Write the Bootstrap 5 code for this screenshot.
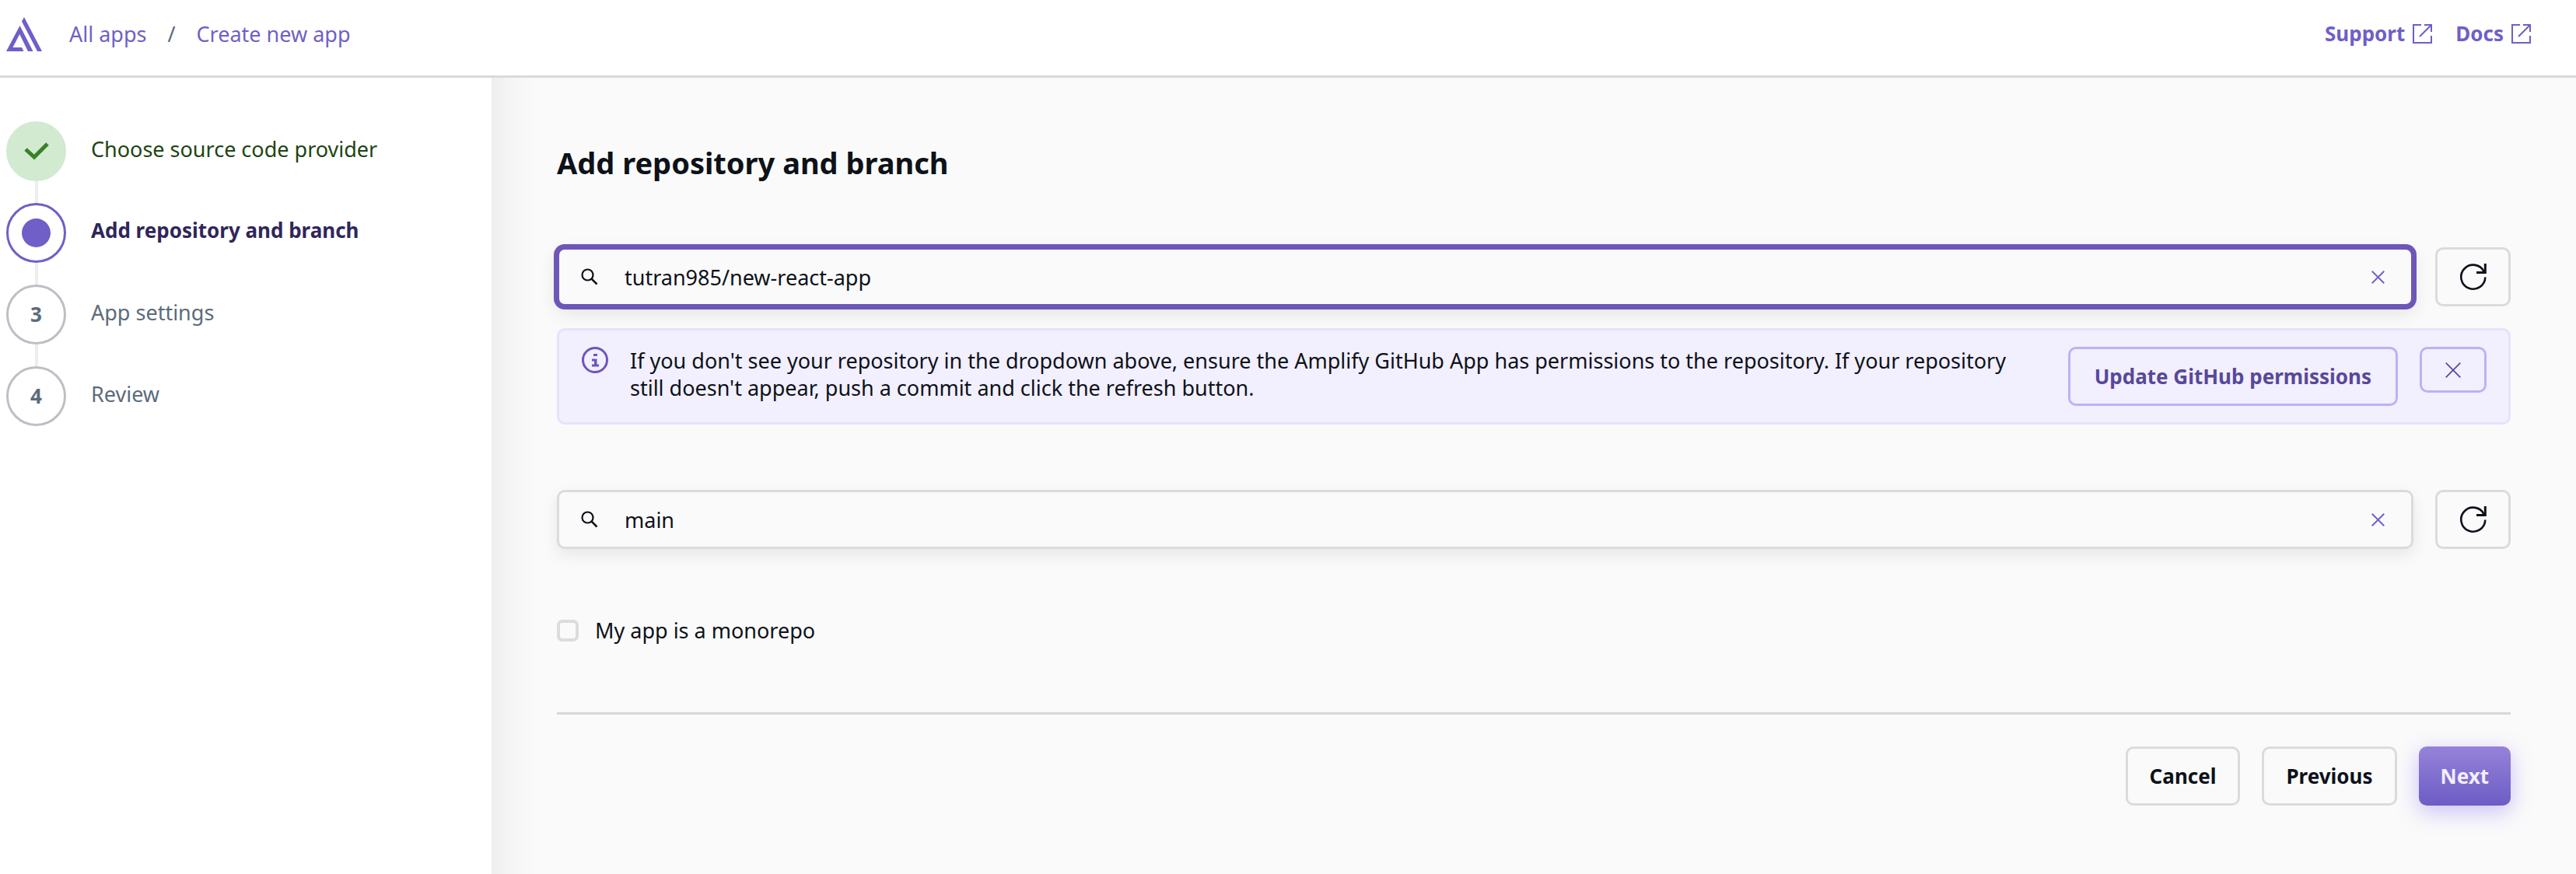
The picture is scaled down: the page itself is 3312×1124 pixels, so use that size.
<!DOCTYPE html>
<html lang="en">
<head>
<meta charset="utf-8">
<meta name="viewport" content="width=device-width, initial-scale=1">
<title>Create new app</title>
<link href="https://cdn.jsdelivr.net/npm/bootstrap@5.3.0/dist/css/bootstrap.min.css" rel="stylesheet">
<style>
  :root { --brand: #6f5fc7; --ink: #0d1219; --muted: #5c6b7a; --line: #dadbdd; }
  body { font-family: "Noto Sans", "Open Sans", sans-serif; font-size: 27px; line-height: 35px; color: var(--ink); background: #fff; }
  svg { display: block; flex: none; }
  a { color: var(--brand); text-decoration: none; }
  .top-bar { height: 100px; border-bottom: 3px solid #dadada; padding: 0 58px 10px 8px; }
  .crumb-list { --bs-breadcrumb-divider-color: var(--muted); --bs-breadcrumb-item-padding-x: 27px; margin-left: 35px; }
  .help-links { gap: 30px; font-size: 26px; font-weight: 700; }
  .help-links a { gap: 10px; }
  .steps-pane { width: 632px; padding: 56px 8px; }
  .step-list { gap: 28px; }
  .step-row { gap: 32px; height: 77px; color: var(--muted); }
  .step-dot { position: relative; width: 77px; height: 77px; border: 3px solid #bcc0c5; border-radius: 50%; font-size: 26px; font-weight: 700; }
  .step-row:not(:last-child) .step-dot::after { content: ""; position: absolute; top: 100%; left: 50%; width: 4px; height: 28px; margin: 3px 0 0 -2px; background: #eee; }
  .step-text { margin-bottom: 7px; }
  .step-done { color: #1d4512; }
  .step-done .step-dot { border-color: #d1ead0; background: #d1ead0; }
  .step-now { color: #2f2659; font-size: 26px; font-weight: 700; }
  .step-now .step-dot { border-color: var(--brand); }
  .work-pane { padding: 84px; background: linear-gradient(90deg, #eee 0, #f5f5f5 24px, #fafafa 56px); }
  h1 { font-size: 38px; line-height: 50px; font-weight: 700; margin-bottom: 84px; }
  .pick-row { gap: 28px; }
  .search-box { height: 76px; padding: 0 34px 0 28px; border: 3px solid var(--line); border-radius: 10px; background: #fafafa; box-shadow: 0 8px 20px rgba(0,0,0,.08); }
  .search-box:focus-within, .search-box.is-focused { border-color: #6e56b9; box-shadow: 0 0 0 4px #6e56b9, 0 8px 24px rgba(0,0,0,.1); }
  .search-box input { margin-left: 34px; padding: 0; border: 0; background: none; font-size: 27px; line-height: 35px; color: var(--ink); }
  .search-box input:focus { background: none; box-shadow: none; }
  .btn { font-size: 26px; line-height: 36px; font-weight: 700; padding: 17px 28px; border: 3px solid var(--line); border-radius: 10px; color: var(--ink); }
  .btn-bare { padding: 6px; border: 0; color: var(--brand); }
  .btn-refresh { width: 97px; padding: 0; }
  .info-strip { margin: 28px 0 84px; padding: 21px 28px 21px 29px; border: 3px solid #e7e2fb; border-radius: 10px; background: #f2effe; gap: 28px; }
  .info-strip .btn { border-color: #bdb2f2; color: #57489b; }
  .info-strip .btn-perms { padding-left: 31px; padding-right: 31px; }
  .info-strip .btn-close-strip { height: 59px; width: 86px; padding: 0; }
  .info-text { margin-right: 48px; }
  .form-check-input { width: 28px; height: 28px; margin: 0; border: 4px solid #dcdcdf; border-radius: 5px; background-color: #fafafa; }
  .mono-row { gap: 21px; margin: 87px 0 88px; }
  .action-row { border-top: 3px solid #d5d7dc; padding-top: 41px; gap: 28px; }
  .action-row .btn-next { border: 0; padding: 20px 28px; color: #f2effe; background: linear-gradient(#9583da, #6d5cc4); box-shadow: 0 8px 28px rgba(130,105,245,.4); }
</style>
<script src="https://cdn.jsdelivr.net/npm/bootstrap@5.3.0/dist/js/bootstrap.bundle.min.js" defer></script>
</head>
<body class="d-flex flex-column min-vh-100">
<svg class="d-none" aria-hidden="true">
  <symbol id="i-ext" viewBox="0 0 25 25"><path d="M11 1H1v23h23V15M15 1h9v9M9 16 24 1" fill="none" stroke="currentColor" stroke-width="2"/></symbol>
  <symbol id="i-search" viewBox="0 0 22 22"><circle cx="8.500" cy="8.500" r="7" fill="none" stroke="currentColor" stroke-width="2.200"/><path d="m13 13 7.500 7.500" stroke="currentColor" stroke-width="2.600"/></symbol>
  <symbol id="i-x" viewBox="0 0 16 16"><path d="m.7.7 14.600 14.600M15.300.7.7 15.300" fill="none" stroke="currentColor" stroke-width="1.800"/></symbol>
  <symbol id="i-x-thin" viewBox="0 0 20 20"><path d="m.7.7 18.600 18.600M19.300.7.7 19.300" fill="none" stroke="currentColor" stroke-width="1.700"/></symbol>
  <symbol id="i-refresh" viewBox="0 0 36 36"><path d="M33.300 18.500A15.500 15.500 0 1 1 31.800 11.500" fill="none" stroke="currentColor" stroke-width="2.600"/><path d="M33.300 1v11.400H22" fill="none" stroke="currentColor" stroke-width="3"/></symbol>
</svg>
<header class="top-bar d-flex align-items-center">
  <a href="#" aria-label="Amplify">
    <svg width="46" height="44" viewBox="0 0 46 44" fill="#6f5fc7"><path d="M17.500 11 34.500 44H28L17.200 22 8.500 39H20l2.500 5H0Z"/><path d="M23 0 46 44H40L20 5.500Z"/></svg>
  </a>
  <nav aria-label="breadcrumb">
    <ol class="breadcrumb crumb-list mb-0">
      <li class="breadcrumb-item"><a href="#">All apps</a></li>
      <li class="breadcrumb-item"><a href="#">Create new app</a></li>
    </ol>
  </nav>
  <nav class="help-links d-flex ms-auto" aria-label="Help">
    <a class="d-flex align-items-center" href="#">Support <svg width="25" height="25"><use href="#i-ext"/></svg></a>
    <a class="d-flex align-items-center" href="#">Docs <svg width="25" height="25"><use href="#i-ext"/></svg></a>
  </nav>
</header>
<div class="d-flex flex-grow-1">
  <aside class="steps-pane flex-shrink-0">
    <ol class="step-list list-unstyled d-flex flex-column mb-0">
      <li class="step-row step-done d-flex align-items-center">
        <span class="step-dot d-flex align-items-center justify-content-center"><svg width="32" height="23" viewBox="0 0 32 23"><path d="m2 9 11 10L30 2" fill="none" stroke="#3b8127" stroke-width="5"/></svg></span>
        <span class="step-text">Choose source code provider</span>
      </li>
      <li class="step-row step-now d-flex align-items-center" aria-current="step">
        <span class="step-dot d-flex align-items-center justify-content-center"><svg width="37" height="37" viewBox="0 0 36 36"><circle cx="18" cy="18" r="18" fill="#6f5fc7"/></svg></span>
        <span class="step-text">Add repository and branch</span>
      </li>
      <li class="step-row d-flex align-items-center">
        <span class="step-dot d-flex align-items-center justify-content-center">3</span>
        <span class="step-text">App settings</span>
      </li>
      <li class="step-row d-flex align-items-center">
        <span class="step-dot d-flex align-items-center justify-content-center">4</span>
        <span class="step-text">Review</span>
      </li>
    </ol>
  </aside>
  <main class="work-pane flex-grow-1">
    <h1>Add repository and branch</h1>
    <form>
      <div class="pick-row d-flex">
        <div class="search-box is-focused d-flex align-items-center flex-grow-1">
          <svg width="22" height="22"><use href="#i-search"/></svg>
          <input type="text" class="form-control" aria-label="Repository" value="tutran985/new-react-app">
          <button type="button" class="btn btn-bare lh-1 p-0" aria-label="Clear repository"><svg width="17" height="17"><use href="#i-x"/></svg></button>
        </div>
        <button type="button" class="btn btn-refresh d-flex align-items-center justify-content-center" aria-label="Refresh repositories"><svg width="36" height="36"><use href="#i-refresh"/></svg></button>
      </div>
      <div class="info-strip d-flex align-items-start" role="status">
        <svg width="34" height="34" viewBox="0 0 34 34"><circle cx="17" cy="17" r="15.500" fill="none" stroke="#6e56b9" stroke-width="3"/><path d="M15 9h5v3h-5zM13 15.500h6.500v7H22v3h-9v-3h3v-4h-3z" fill="#6e56b9"/></svg>
        <div class="info-text flex-grow-1">If you don't see your repository in the dropdown above, ensure the Amplify GitHub App has permissions to the repository. If your repository still doesn't appear, push a commit and click the refresh button.</div>
        <button type="button" class="btn btn-perms text-nowrap">Update GitHub permissions</button>
        <button type="button" class="btn btn-close-strip d-flex align-items-center justify-content-center flex-shrink-0" aria-label="Dismiss"><svg width="20" height="20"><use href="#i-x-thin"/></svg></button>
      </div>
      <div class="pick-row d-flex">
        <div class="search-box d-flex align-items-center flex-grow-1">
          <svg width="22" height="22"><use href="#i-search"/></svg>
          <input type="text" class="form-control" aria-label="Branch" value="main">
          <button type="button" class="btn btn-bare lh-1 p-0" aria-label="Clear branch"><svg width="17" height="17"><use href="#i-x"/></svg></button>
        </div>
        <button type="button" class="btn btn-refresh d-flex align-items-center justify-content-center" aria-label="Refresh branches"><svg width="36" height="36"><use href="#i-refresh"/></svg></button>
      </div>
      <div class="mono-row d-flex align-items-center">
        <input class="form-check-input" type="checkbox" id="monorepo">
        <label for="monorepo">My app is a monorepo</label>
      </div>
      <div class="action-row d-flex justify-content-end">
        <button type="button" class="btn">Cancel</button>
        <button type="button" class="btn">Previous</button>
        <button type="submit" class="btn btn-next">Next</button>
      </div>
    </form>
  </main>
</div>
</body>
</html>
